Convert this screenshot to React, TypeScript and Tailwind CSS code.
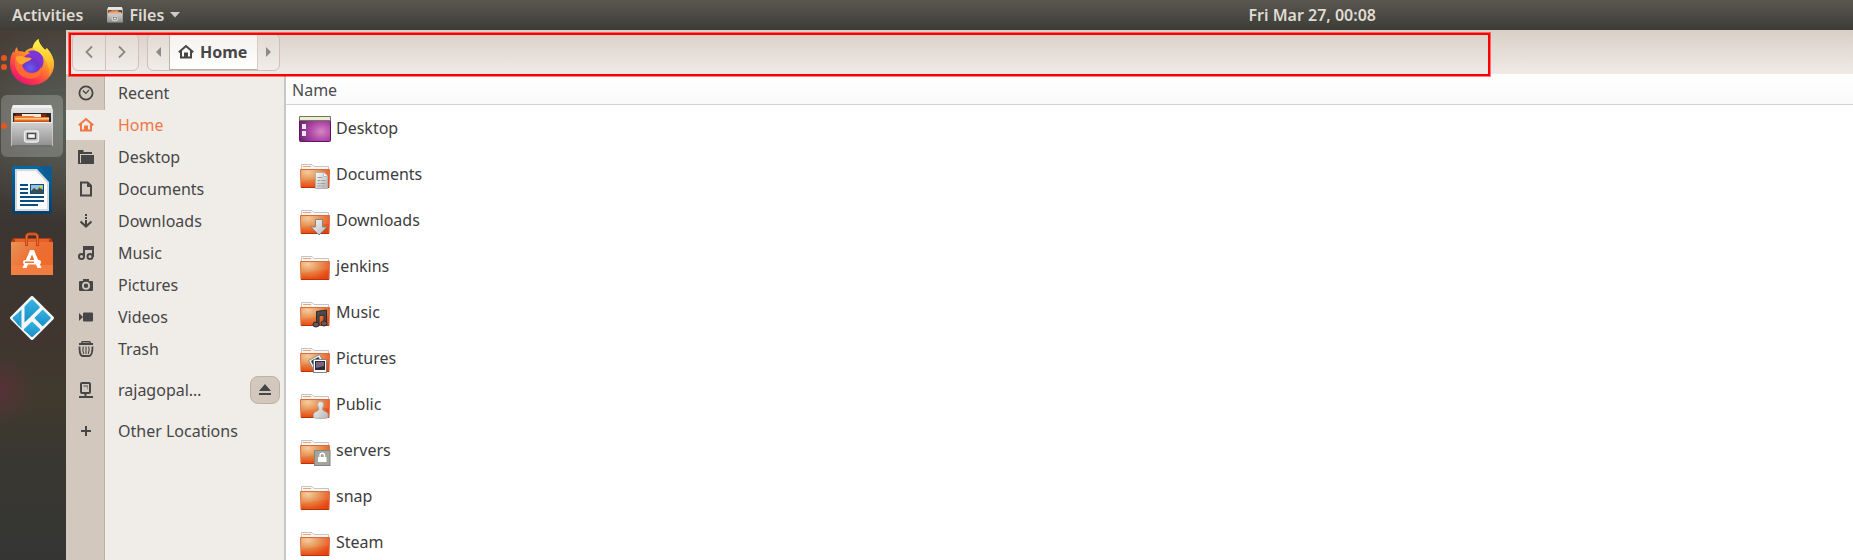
import type { ReactNode } from "react";

type IconProps = { className?: string };

/* ---------- dock icons ---------- */

function FirefoxIcon() {
  return (
    <svg width="46" height="48" viewBox="0 0 46 48" aria-hidden="true">
      <defs>
        <linearGradient id="fx-body" x1="0.85" y1="0.05" x2="0.25" y2="1">
          <stop offset="0" stopColor="#fff04a" />
          <stop offset="0.3" stopColor="#ffb52b" />
          <stop offset="0.55" stopColor="#ff6f33" />
          <stop offset="0.8" stopColor="#fb2f55" />
          <stop offset="1" stopColor="#e0147a" />
        </linearGradient>
        <radialGradient id="fx-globe" cx="0.4" cy="0.75" r="0.8">
          <stop offset="0" stopColor="#6a5cf5" />
          <stop offset="0.5" stopColor="#6a35c9" />
          <stop offset="1" stopColor="#a52fd0" />
        </radialGradient>
        <linearGradient id="fx-flame" x1="0.5" y1="0" x2="0.6" y2="1">
          <stop offset="0" stopColor="#fff44f" />
          <stop offset="0.6" stopColor="#ffc42e" />
          <stop offset="1" stopColor="#ff8a2b" />
        </linearGradient>
      </defs>
      <path
        d="M8 9c.3 1.800.8 3.300 1.800 4.500 2-.4 4-.2 5.700.7C18 11.200 21 10.200 23.500 10c.8-4 3-7 6-9 .3 4.500 3.500 7.300 6 10.500 1.500.5 2-.5 2.300-1.500C42 15 45 20 45 26.500 44.500 38.500 35 47 23 47S1 38 1 25.500C1 20 2.300 16 4.500 13c.2 1 .4 1.600.8 2C5.500 12.500 6.500 10.500 8 9z"
        fill="url(#fx-body)"
      />
      <path
        d="M29.500 1c.3 4.500 3.500 7.300 6 10.500 1.500.5 2-.5 2.300-1.500C42 15 45 20 45 26.500c-.2 5-2.200 9-5 12 .8-4 .3-8-1.500-11.500-1-6-6-11-15-17 .8-4 3-7 6-9z"
        fill="url(#fx-flame)"
      />
      <circle cx="23" cy="25" r="10" fill="url(#fx-globe)" />
      <path d="M19 13.500c5-2.500 12-.5 14.500 5 2 4.500 1 9-1.500 12 .8-6-1.500-11-7-13-2-.8-4.500-2-6-4z" fill="#7a35d8" />
      <path
        d="M7 17.500c3-1.500 6.500-1 9 1.500 2.300.3 5 .5 6.500 1-.4 2-3.500 3-5.500 4-1.500 1-2.500 2.500-4 3 .5 5.500 5.500 9 11 8.500 4.500-.5 7.500-3 9.500-5.500-1 7-7 11.500-13.500 10.500C11 39.500 6 32 6 25c0-3 0-5.500 1-7.500z"
        fill="#ff7a2c"
        fillOpacity="0.75"
      />
      <path d="M7 19c3-1.500 6.500-1.500 9 .5 2.300.3 5 .3 6.500.7-.4 2-3.500 2.800-5.500 3.800-1.500.8-2.500 2-4.500 2.500-3.500-1-5.500-4-5.500-7.500z" fill="#ffa62e" />
    </svg>
  );
}

function CabinetIcon({ size = 44 }: { size?: number }) {
  return (
    <svg width={size} height={size} viewBox="0 0 44 44" aria-hidden="true">
      <defs>
        <linearGradient id="cab-front" x1="0" y1="0" x2="0" y2="1">
          <stop offset="0" stopColor="#d2d2d2" />
          <stop offset="1" stopColor="#8e8e8e" />
        </linearGradient>
        <linearGradient id="cab-top" x1="0" y1="0" x2="0" y2="1">
          <stop offset="0" stopColor="#e4e4e4" />
          <stop offset="1" stopColor="#bdbdbd" />
        </linearGradient>
      </defs>
      <path d="M3 1h38l2 5v36H1V6z" fill="url(#cab-top)" />
      <path d="M3 1h38l1 3H2z" fill="#f0f0f0" />
      <path d="M3 9h38v10H3z" fill="#2e2626" />
      <path d="M6 10h30l1 3H5z" fill="#7b2c10" />
      <path d="M12 10h19v3H12z" fill="#f3e9dc" />
      <path d="M4 12h19l2 1h14v6H4z" fill="#ec7a2d" />
      <path d="M5 14h34v1.500H5z" fill="#ffc98d" />
      <path d="M4 16.500h35V19H4z" fill="#c9581c" />
      <path d="M2 18h40v24.500H2z" fill="url(#cab-front)" />
      <path d="M2 18h40v1H2z" fill="#ededed" />
      <path d="M2 41h40v2H2z" fill="#6f6f6f" />
      <rect x="14.500" y="27" width="14" height="11" rx="2.500" fill="#c9c9c9" stroke="#ededed" strokeWidth="1.300" />
      <rect x="17.500" y="29.500" width="8" height="5" fill="#f5f5f5" stroke="#4a4a4a" strokeWidth="1.400" />
    </svg>
  );
}

function WriterIcon() {
  return (
    <svg width="40" height="48" viewBox="0 0 40 48" aria-hidden="true">
      <defs>
        <linearGradient id="wr-edge" x1="0" y1="0" x2="0" y2="1">
          <stop offset="0" stopColor="#0369a8" />
          <stop offset="1" stopColor="#03426d" />
        </linearGradient>
      </defs>
      <path d="M3 0h24l13 13v32a3 3 0 0 1-3 3H3a3 3 0 0 1-3-3V3a3 3 0 0 1 3-3z" fill="url(#wr-edge)" />
      <path d="M28 0h10a2 2 0 0 1 2 2v11z" fill="#0a5c93" />
      <path d="M3 3h22l12 13v29H3z" fill="#d9d9d9" />
      <path d="M5 5h19l11 12v26H5z" fill="#fbfbfb" />
      <path d="M8 18h8v2H8zm0 4h8v2H8zm0 4h8v2H8zm0 4h24v2H8zm0 4h24v2H8zm0 4h18v2H8z" fill="#0a4f80" />
      <path d="M18 18h14v10H18z" fill="#0a4f80" />
      <path d="M19 19h12v8H19z" fill="#8fc4e6" />
      <path d="M19 25l3-3 3 2 3-3 3 3v3H19z" fill="#3d4f4a" />
      <circle cx="29" cy="21" r="1.500" fill="#f2c229" />
    </svg>
  );
}

function SoftwareIcon() {
  return (
    <svg width="42" height="44" viewBox="0 0 42 44" aria-hidden="true">
      <defs>
        <linearGradient id="sw-bag" x1="0" y1="0" x2="1" y2="0.600">
          <stop offset="0" stopColor="#e99358" />
          <stop offset="0.550" stopColor="#ee6f31" />
          <stop offset="1" stopColor="#ec6a2c" />
        </linearGradient>
      </defs>
      <path d="M2 6h38l2 4H0z" fill="#b33c10" />
      <path d="M4 7h34v3H4z" fill="#e2622a" />
      <path d="M0 10h42v33H0z" fill="url(#sw-bag)" />
      <path d="M0 33h42v10H0z" fill="#f58448" fillOpacity="0.700" />
      <path d="M15.500 14V5a3 3 0 0 1 3-3h5a3 3 0 0 1 3 3v9" fill="none" stroke="#c4440f" strokeWidth="3" />
      <path d="M15.500 13V5a3 3 0 0 1 3-3h5a3 3 0 0 1 3 3v8" fill="none" stroke="#f0683a" strokeWidth="1.200" />
      <path d="M19 18h4l7.500 18h-4L21 22.500 15.500 36h-4z" fill="#fff" />
      <rect x="12" y="28" width="18" height="4.500" rx="2.200" fill="#fff" />
      <path d="M14 29.500h9v1.500h-9z" fill="#ee7238" />
    </svg>
  );
}

function KodiIcon() {
  return (
    <svg width="44" height="44" viewBox="0 0 44 44" aria-hidden="true">
      <defs>
        <linearGradient id="kd" x1="0" y1="0" x2="0" y2="1">
          <stop offset="0" stopColor="#35b3e3" />
          <stop offset="1" stopColor="#1a8fc6" />
        </linearGradient>
      </defs>
      <path d="M20.500.8a2 2 0 0 1 3 0l19.700 19.700a2 2 0 0 1 0 3L23.500 43.200a2 2 0 0 1-3 0L.8 23.500a2 2 0 0 1 0-3z" fill="#f4f6f7" />
      <path d="M21.200 3.800a1.200 1.200 0 0 1 1.600 0l6.700 6.700a1 1 0 0 1 0 1.400L14.500 26.500V10.500z" fill="url(#kd)" />
      <path d="M9 16v14L2.800 22.800a1 1 0 0 1 0-1.400z" fill="url(#kd)" />
      <path d="M9 16l2.500-2.500v18.700L9 29.700z" fill="#2a9fd2" />
      <path d="M32 14.200a1 1 0 0 1 1.400 0l7.100 7.100a1 1 0 0 1 0 1.400l-7.100 7.100a1 1 0 0 1-1.400 0L25 22.700a1 1 0 0 1 0-1.400z" fill="url(#kd)" />
      <path d="M21.300 26a1 1 0 0 1 1.400 0l7.300 7a1 1 0 0 1 0 1.300l-7.300 6.500a1 1 0 0 1-1.400 0L14 34.300a1 1 0 0 1 0-1.300z" fill="url(#kd)" />
    </svg>
  );
}

/* ---------- symbolic sidebar icons ---------- */

function Symbolic({ children, className }: IconProps & { children: ReactNode }) {
  return (
    <svg width="16" height="16" viewBox="0 0 16 16" className={className} fill="currentColor" aria-hidden="true">
      {children}
    </svg>
  );
}

const RecentIcon = () => (
  <Symbolic>
    <circle cx="8" cy="8" r="6.600" fill="none" stroke="currentColor" strokeWidth="1.800" />
    <path d="M4.800 5.500L7.800 8.300 11 5" fill="none" stroke="currentColor" strokeWidth="1.200" />
  </Symbolic>
);

const HomeIcon = () => (
  <Symbolic>
    <path d="M.8 8.300L8 2l7.200 6.300" fill="none" stroke="currentColor" strokeWidth="2" />
    <path d="M3 7v6.500h4v-4h2v4h4V7" fill="none" stroke="currentColor" strokeWidth="2" />
  </Symbolic>
);

const DesktopIcon = () => (
  <Symbolic>
    <path d="M0 1h5.500v2H14v2H2v9H0z" />
    <path d="M3 6h13v9H3z" />
    <path d="M2 14h1v1H0v-1z" />
  </Symbolic>
);

const DocumentIcon = () => (
  <Symbolic>
    <path d="M3 1.500h6.500L13 5v9.500H3z" fill="none" stroke="currentColor" strokeWidth="2" />
    <path d="M9 1h1.500L14 4.500V6H9z" />
  </Symbolic>
);

const DownloadIcon = () => (
  <Symbolic>
    <path d="M7 1h2v2H7zM7 4h2v2H7zM7 7h2v5H7z" />
    <path d="M2.500 8.500L8 13.500l5.500-5" fill="none" stroke="currentColor" strokeWidth="2.200" />
  </Symbolic>
);

const MusicIcon = () => (
  <Symbolic>
    <path d="M5 1h11v11h-2V5H7v7H5z" />
    <circle cx="3.500" cy="11.500" r="2.500" fill="none" stroke="currentColor" strokeWidth="2" />
    <circle cx="12" cy="11.500" r="2.500" fill="none" stroke="currentColor" strokeWidth="2" />
  </Symbolic>
);

const CameraIcon = () => (
  <Symbolic>
    <path
      fillRule="evenodd"
      d="M5 2h6v2h3a1 1 0 0 1 1 1v8a1 1 0 0 1-1 1H2a1 1 0 0 1-1-1V5a1 1 0 0 1 1-1h3zm3 2.800a4 4 0 1 0 0 8 4 4 0 0 0 0-8z"
    />
    <circle cx="8" cy="8.800" r="2.200" />
  </Symbolic>
);

const VideoIcon = () => (
  <Symbolic>
    <path d="M6 3.500h8a1 1 0 0 1 1 1v7a1 1 0 0 1-1 1H6a1 1 0 0 1-1-1v-7a1 1 0 0 1 1-1zM1 4l4 4-4 4z" />
  </Symbolic>
);

const TrashIcon = () => (
  <Symbolic>
    <path d="M3 1.500A1.500 1.500 0 0 1 4.500 0h7A1.500 1.500 0 0 1 13 1.500V2h2v2H1V2h2zM4.500 1.500h7V2h-7z" fillRule="evenodd" />
    <path d="M1.500 5.500c0 4 0 9.500 3.500 9.500h6c3.500 0 3.500-5.500 3.500-9.500" fill="none" stroke="currentColor" strokeWidth="1.800" />
    <path d="M8 5.500v7.500M5.300 5.500c-.8 2.500-.5 5.500.5 7.500M10.700 5.500c.8 2.500.5 5.500-.5 7.500" fill="none" stroke="currentColor" strokeWidth="1.100" />
  </Symbolic>
);

const NetworkIcon = () => (
  <Symbolic>
    <rect x="3" y="0" width="9" height="10" rx="1" fill="none" stroke="currentColor" strokeWidth="2" transform="translate(0 1)" />
    <path d="M5.500 3.500H10v1H5.500zM9 5.500h1v1H9zM6.500 11h2v3h-2zM1 14h14v2H1z" />
  </Symbolic>
);

const PlusIcon = () => (
  <Symbolic>
    <path d="M7 3h2v4h4v2H9v4H7V9H3V7h4z" />
  </Symbolic>
);

/* ---------- file list icons ---------- */

function FolderIcon({ children }: { children?: ReactNode }) {
  return (
    <svg width="32" height="32" viewBox="0 0 32 32" aria-hidden="true">
      <defs>
        <radialGradient id="folder-fill" cx="0.250" cy="0.150" r="1">
          <stop offset="0" stopColor="#f3c894" />
          <stop offset="0.400" stopColor="#e68e4c" />
          <stop offset="0.800" stopColor="#ea5018" />
          <stop offset="1" stopColor="#dd4413" />
        </radialGradient>
        <linearGradient id="silver" x1="0" y1="0" x2="1" y2="1">
          <stop offset="0" stopColor="#fafafa" />
          <stop offset="1" stopColor="#b5b5b5" />
        </linearGradient>
      </defs>
      <path d="M2.500 13V6.500H13l2 2h14.500V13z" fill="#f7f7f7" stroke="#c4c4c4" />
      <path d="M4 8h8v1H4z" fill="#f0a06a" />
      <path d="M1.500 11.500h29l-.5 18H2z" fill="url(#folder-fill)" stroke="#dd6b3a" />
      <path d="M2 12h28v8C20 20 11 21 2 24z" fill="#fff" fillOpacity="0.080" />
      <path d="M2 29h28v1H2z" fill="#b9330c" />
      {children}
    </svg>
  );
}

function DesktopFolderIcon() {
  return (
    <svg width="32" height="32" viewBox="0 0 32 32" aria-hidden="true">
      <defs>
        <radialGradient id="desk" cx="0.700" cy="0.600" r="0.700">
          <stop offset="0" stopColor="#d985c4" />
          <stop offset="0.500" stopColor="#b04aa8" />
          <stop offset="1" stopColor="#74297b" />
        </radialGradient>
      </defs>
      <rect x="0.500" y="4.500" width="31" height="25" rx="1" fill="url(#desk)" stroke="#65136a" />
      <path d="M1 4h30l1 1v4H0V5z" fill="#77765a" />
      <path d="M1 5h30v3H1z" fill="#ecebd5" />
      <path d="M3 12h4v5H3zM3 19h4v5H3z" fill="#f2eaf2" />
    </svg>
  );
}

const DocumentsFolder = () => (
  <FolderIcon>
    <path d="M16.500 14.500h8.500l3.500 3.500v12.500h-12z" fill="url(#silver)" stroke="#b0b0b0" />
    <path d="M24.500 14.500v4h4" fill="#fff" stroke="#bbb" />
    <path d="M18.500 19.500h5M18.500 22.500h3m1 0h4M18.500 25.500h2m1 0h5M18.500 28h3m1 0h3" stroke="#a0a0a0" />
  </FolderIcon>
);

const DownloadsFolder = () => (
  <FolderIcon>
    <path d="M16.500 15.500h7V23h4.500l-8 8-8-8h4.500z" fill="url(#silver)" stroke="#858585" />
  </FolderIcon>
);

const MusicFolder = () => (
  <FolderIcon>
    <path d="M17.500 15.500l10-1.500v13h-2.500v-8l-5 .8V29h-2.500z" fill="#4b4b4b" stroke="#2b2b2b" />
    <ellipse cx="17" cy="28.500" rx="3" ry="2.500" fill="#5c5c5c" stroke="#2b2b2b" />
    <ellipse cx="25" cy="27.500" rx="3" ry="2.500" fill="#5c5c5c" stroke="#2b2b2b" />
  </FolderIcon>
);

const PicturesFolder = () => (
  <FolderIcon>
    <path d="M9.500 18.500l11-6 4 7-10 8z" fill="#f3f3f3" stroke="#8d8d8d" />
    <path d="M12 19l7.500-4 2 4-7 5z" fill="#353238" />
    <rect x="14.500" y="17.500" width="13" height="13" fill="#fff" stroke="#858585" />
    <path d="M16 19h10v9H16z" fill="#2d2933" />
    <path d="M17 20h8v4l-8 2z" fill="#77687f" />
  </FolderIcon>
);

const PublicFolder = () => (
  <FolderIcon>
    <path
      d="M21.500 13.500c2.500 0 3.500 2 3 4-.3 1.500-1.200 2.500-1.200 4 1 2 5.700 2 5.700 5v3c-2 1.500-12 1.500-14.500 0v-3c0-3 4.500-3 5.500-5 0-1.500-1-2.500-1.300-4-.4-2 .8-4 2.800-4z"
      fill="url(#silver)"
      stroke="#a8a8a8"
      strokeWidth="0.800"
    />
  </FolderIcon>
);

const LockedFolder = () => (
  <FolderIcon>
    <rect x="15.500" y="16.500" width="15.500" height="15" fill="#a3a69d" stroke="#82857d" />
    <path d="M21 23v-1.500a2.200 2.200 0 0 1 4.500 0V23" fill="none" stroke="#fff" strokeWidth="1.400" />
    <path d="M19 23h8.500v5H19z" fill="#fff" />
  </FolderIcon>
);

/* ---------- data ---------- */

const dockItems: { name: string; icon: ReactNode; windows: number; active?: boolean }[] = [
  { name: "Firefox", icon: <FirefoxIcon />, windows: 2 },
  { name: "Files", icon: <CabinetIcon />, windows: 1, active: true },
  { name: "LibreOffice Writer", icon: <WriterIcon />, windows: 0 },
  { name: "Ubuntu Software", icon: <SoftwareIcon />, windows: 0 },
  { name: "Kodi", icon: <KodiIcon />, windows: 0 },
];

const places: { name: string; icon: ReactNode; active?: boolean; eject?: boolean; spaced?: boolean }[] = [
  { name: "Recent", icon: <RecentIcon /> },
  { name: "Home", icon: <HomeIcon />, active: true },
  { name: "Desktop", icon: <DesktopIcon /> },
  { name: "Documents", icon: <DocumentIcon /> },
  { name: "Downloads", icon: <DownloadIcon /> },
  { name: "Music", icon: <MusicIcon /> },
  { name: "Pictures", icon: <CameraIcon /> },
  { name: "Videos", icon: <VideoIcon /> },
  { name: "Trash", icon: <TrashIcon /> },
  { name: "rajagopal…", icon: <NetworkIcon />, eject: true, spaced: true },
  { name: "Other Locations", icon: <PlusIcon />, spaced: true },
];

const files: { name: string; icon: ReactNode }[] = [
  { name: "Desktop", icon: <DesktopFolderIcon /> },
  { name: "Documents", icon: <DocumentsFolder /> },
  { name: "Downloads", icon: <DownloadsFolder /> },
  { name: "jenkins", icon: <FolderIcon /> },
  { name: "Music", icon: <MusicFolder /> },
  { name: "Pictures", icon: <PicturesFolder /> },
  { name: "Public", icon: <PublicFolder /> },
  { name: "servers", icon: <LockedFolder /> },
  { name: "snap", icon: <FolderIcon /> },
  { name: "Steam", icon: <FolderIcon /> },
];

/* ---------- page parts ---------- */

function TopBar() {
  return (
    <header className="flex h-[30px] shrink-0 items-center bg-linear-to-b from-[#5a5750] to-[#3d3c37] pl-3 text-base font-semibold text-[#dfdbd2]">
      <button type="button">Activities</button>
      <button type="button" className="ml-6 flex items-center">
        <CabinetIcon size={16} />
        <span className="ml-1.5">Files</span>
        <svg width="10" height="6" viewBox="0 0 10 6" className="ml-1.5" aria-hidden="true">
          <path d="M0 0h10L5 5.500z" fill="#cfcbc3" />
        </svg>
      </button>
      <button type="button" className="mr-[477px] ml-auto">
        Fri Mar 27, 00:08
      </button>
    </header>
  );
}

function Dock() {
  return (
    <nav
      aria-label="Dock"
      className="flex w-[66px] shrink-0 flex-col gap-0.5 bg-[radial-gradient(circle_at_0px_360px,#563236_0px,#56323600_36px),radial-gradient(circle_at_60px_90px,#596057_0px,#59605700_100px),linear-gradient(to_bottom,#473e37_0px,#45403b_130px,#3b3531_200px,#40362f_310px,#403a2e_370px,#383731_430px,#353534_530px)] px-px pt-px"
    >
      {dockItems.map((item) => (
        <button
          key={item.name}
          type="button"
          aria-label={item.name}
          className={
            item.active
              ? "relative flex h-[62px] w-[62px] items-center justify-center rounded-md bg-white/20"
              : "relative flex h-[62px] w-[62px] items-center justify-center"
          }
        >
          {item.icon}
          <span className="absolute top-0 left-0 flex h-full flex-col items-center justify-center gap-[3px]">
            {Array.from({ length: item.windows }, (_, i) => (
              <span key={i} className="h-1.5 w-1.5 rounded-full bg-[#e95420]" />
            ))}
          </span>
        </button>
      ))}
    </nav>
  );
}

function PathBar() {
  return (
    <div className="relative flex h-11 shrink-0 gap-2 bg-linear-to-b from-[#d9cfc6] to-[#f0ebe7] pt-[3px] pr-2 pb-[3px] pl-1.5 text-[#8d8882]">
      <div className="flex rounded-md border border-[#cbc1b8] bg-white/20">
        <button type="button" aria-label="Back" className="flex w-[33px] items-center justify-center border-r border-[#cbc1b8]">
          <svg width="8" height="14" viewBox="0 0 8 14" aria-hidden="true">
            <path d="M7 1.500L1.500 7 7 12.500" fill="none" stroke="currentColor" strokeWidth="1.800" />
          </svg>
        </button>
        <button type="button" aria-label="Forward" className="flex w-8 items-center justify-center">
          <svg width="8" height="14" viewBox="0 0 8 14" aria-hidden="true">
            <path d="M1 1.500L6.500 7 1 12.500" fill="none" stroke="currentColor" strokeWidth="1.800" />
          </svg>
        </button>
      </div>
      <div className="flex rounded-md border border-[#cbc1b8] bg-white/20">
        <button type="button" aria-label="Scroll path left" className="flex w-[22px] items-center justify-center border-r border-[#bfb4a9]">
          <svg width="5" height="10" viewBox="0 0 5 10" aria-hidden="true">
            <path d="M5 0v10L0 5z" fill="currentColor" />
          </svg>
        </button>
        <button
          type="button"
          className="flex w-[87px] items-center gap-1.5 border-b border-[#b9b09c] bg-linear-to-b from-[#f4f1ee] to-white pl-2 text-base font-bold text-[#464646]"
        >
          <HomeIcon />
          Home
        </button>
        <button type="button" aria-label="Scroll path right" className="flex w-[22px] items-center justify-center border-l border-[#d5ccc4]">
          <svg width="5" height="10" viewBox="0 0 5 10" aria-hidden="true">
            <path d="M0 0v10l5-5z" fill="currentColor" />
          </svg>
        </button>
      </div>
      <div
        aria-hidden="true"
        className="pointer-events-none absolute top-[3px] left-[3px] h-[43px] w-[1421px] max-w-full border-2 border-[#ff0000] ring-1 ring-[#ff0000]/50"
      />
    </div>
  );
}

function Sidebar() {
  return (
    <nav
      aria-label="Places"
      className="w-[220px] shrink-0 border-r-2 border-[#c9c7c5] bg-[linear-gradient(to_right,#d3c8be_38px,#bdb0a4_38px,#bdb0a4_39px,#f0ede9_39px)] pt-[3px]"
    >
      <ul>
        {places.map((place) => (
          <li key={place.name} className={place.spaced ? "mt-[9px] flex h-8 items-center pr-1" : "flex h-8 items-center pr-1"}>
            <a
              href="#"
              className={
                place.active
                  ? "flex h-[30px] flex-1 items-center bg-[#f0ede9] text-[#f07746]"
                  : "flex h-[30px] flex-1 items-center text-[#464646]"
              }
            >
              <span className="flex w-[39px] justify-center">{place.icon}</span>
              <span className="pl-[13px]">{place.name}</span>
            </a>
            {place.eject && (
              <button
                type="button"
                aria-label="Eject"
                className="flex h-7 w-[30px] items-center justify-center rounded-lg border border-[#bfb1a5] bg-[#d3c8be] text-[#464646]"
              >
                <svg width="12" height="12" viewBox="0 0 12 12" fill="currentColor" aria-hidden="true">
                  <path d="M6 0l6 7H0zM0 9h12v2H0z" />
                </svg>
              </button>
            )}
          </li>
        ))}
      </ul>
    </nav>
  );
}

function FileList() {
  return (
    <main className="min-w-0 flex-1 bg-white">
      <table className="w-full border-collapse text-left text-[#3d3d3d]">
        <thead>
          <tr className="h-[31px] bg-linear-to-b from-white to-[#fafafa] shadow-[inset_0_-1px_0_#d5d3d1]">
            <th scope="col" className="py-0 pl-1.5 font-normal text-[#4c4c4c]">
              Name
            </th>
          </tr>
        </thead>
        <tbody>
          {files.map((file) => (
            <tr key={file.name} className="h-[46px]">
              <td className="py-0 pl-[13px]">
                <div className="flex items-center gap-[5px]">
                  {file.icon}
                  <span>{file.name}</span>
                </div>
              </td>
            </tr>
          ))}
        </tbody>
      </table>
    </main>
  );
}

export default function App() {
  return (
    <div className="flex h-screen flex-col overflow-hidden font-['Noto_Sans','Open_Sans',sans-serif] text-base">
      <TopBar />
      <div className="flex min-h-0 flex-1">
        <Dock />
        <div className="flex min-w-0 flex-1 flex-col">
          <PathBar />
          <div className="flex min-h-0 flex-1">
            <Sidebar />
            <FileList />
          </div>
        </div>
      </div>
    </div>
  );
}
